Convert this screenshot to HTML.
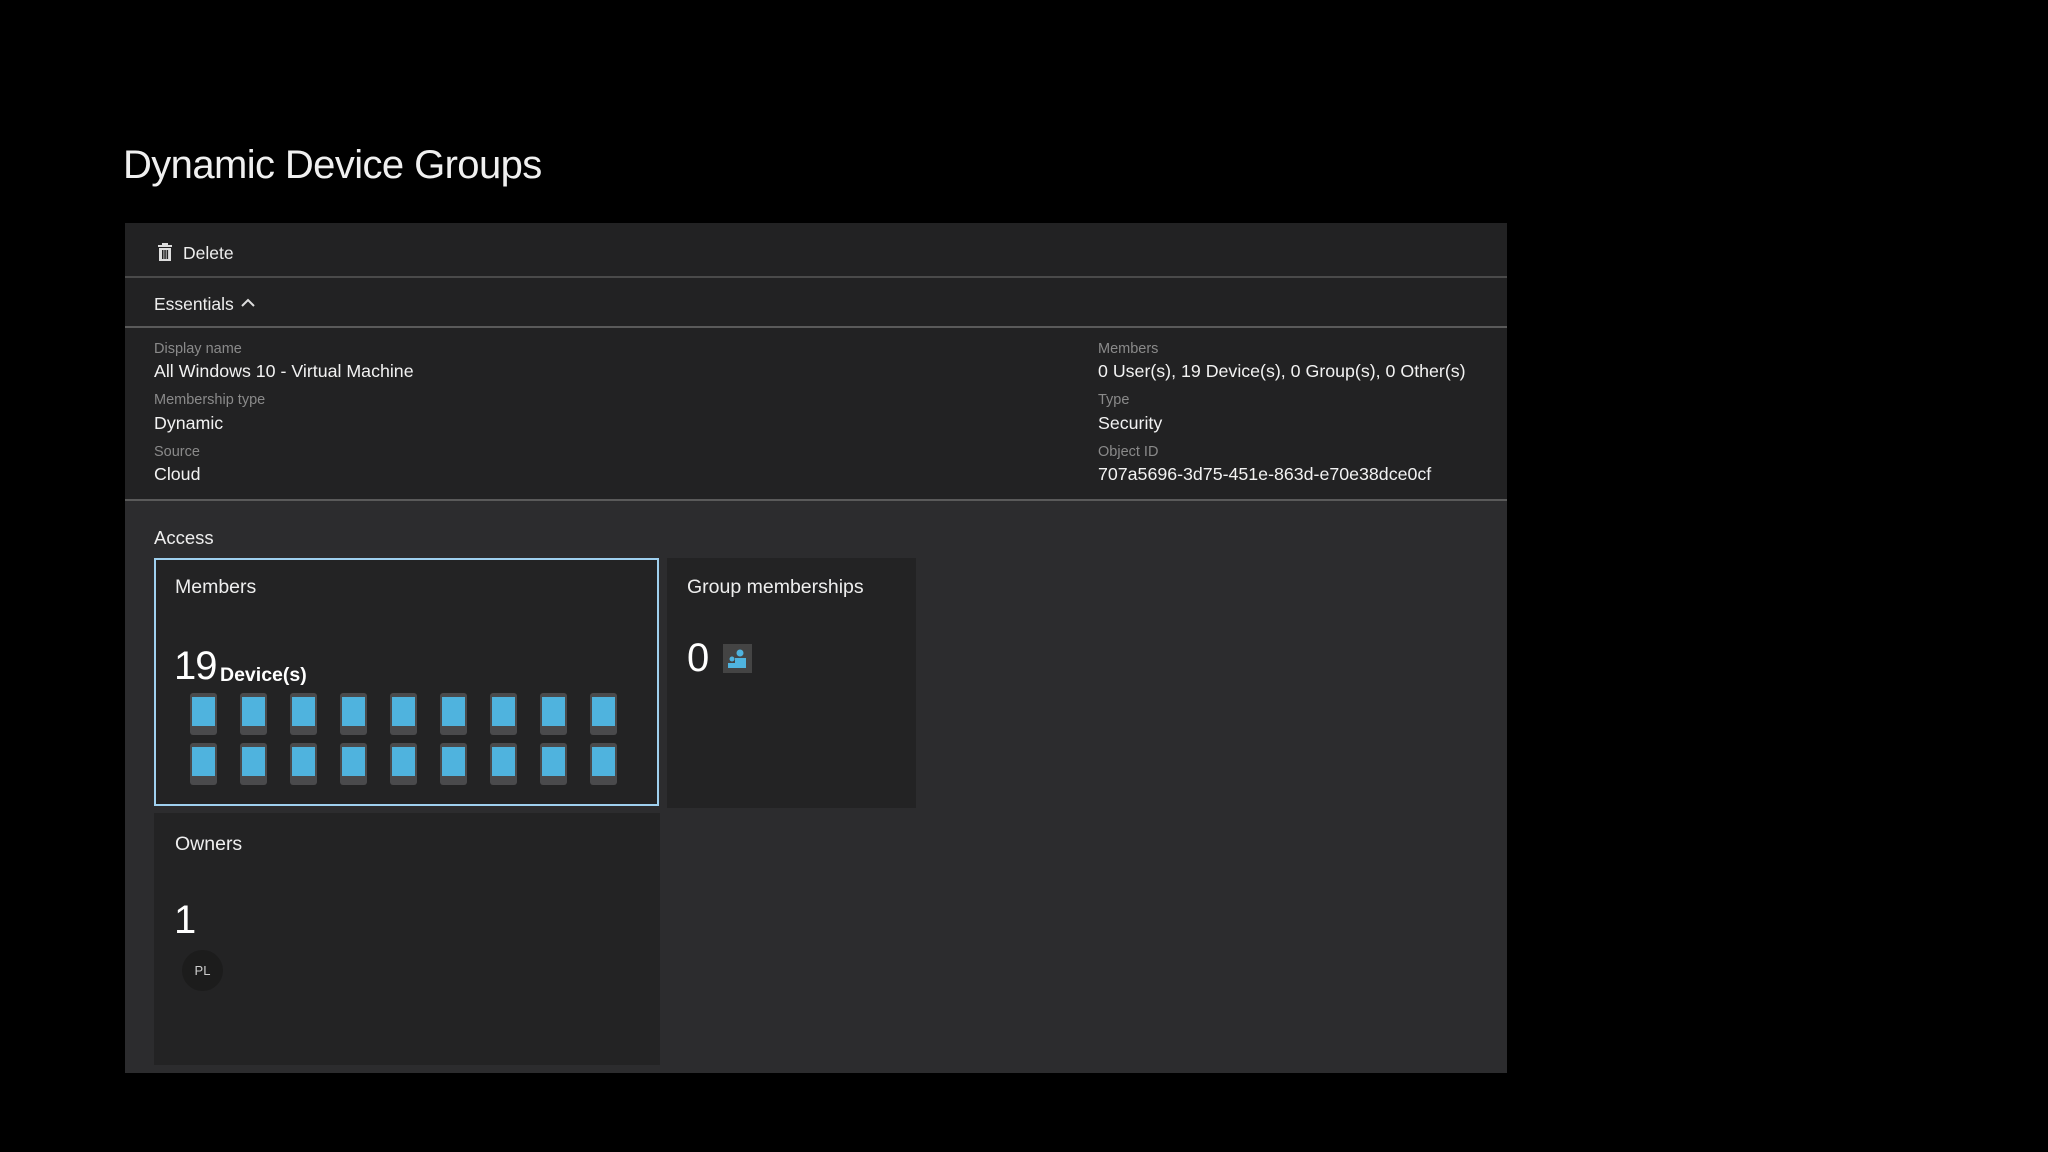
<!DOCTYPE html>
<html><head><meta charset="utf-8"><style>
*{margin:0;padding:0;box-sizing:border-box}
body{width:2048px;height:1152px;background:#000;font-family:"Liberation Sans",sans-serif;color:#fff;position:relative;overflow:hidden}
.a{position:absolute}
.lbl{font-size:14.5px;color:#8a8a8a}
.val{font-size:17.8px;color:#f2f2f2}
.dev{position:absolute;width:27px;height:42px;background:#4a4a4c;border-radius:3px}
.dev i{position:absolute;left:2px;top:4px;width:23px;height:29px;background:#4fb3de}
</style></head><body>
<div class="a" style="left:123px;top:143px;font-size:40px;font-weight:300;color:#f0f0f0;letter-spacing:-0.6px">Dynamic Device Groups</div>
<div class="a" style="left:125px;top:223px;width:1382px;height:850px;background:#2c2c2e"></div>
<div class="a" style="left:125px;top:223px;width:1382px;height:277px;background:#222223"></div>
<div class="a" style="left:125px;top:276px;width:1382px;height:2px;background:#4a4a4a"></div>
<div class="a" style="left:125px;top:326px;width:1382px;height:2px;background:#5a5a5a"></div>
<div class="a" style="left:125px;top:499px;width:1382px;height:2px;background:#5a5a5a"></div>
<svg class="a" style="left:157px;top:243px" width="16" height="18" viewBox="0 0 16 18"><rect x="1" y="2" width="14" height="2" fill="#ddd"/><rect x="5" y="0" width="6" height="2" fill="#ddd"/><rect x="2" y="5" width="12" height="13" fill="#ddd"/><rect x="5" y="7" width="1.5" height="9" fill="#222"/><rect x="7.3" y="7" width="1.5" height="9" fill="#222"/><rect x="9.6" y="7" width="1.5" height="9" fill="#222"/></svg>
<div class="a" style="left:183px;top:243px;font-size:17.5px;color:#eee">Delete</div>
<div class="a" style="left:154px;top:294px;font-size:17.5px;color:#eee">Essentials</div>
<svg class="a" style="left:240px;top:296px" width="16" height="12"><path d="M2 10 L8 4 L14 10" stroke="#ddd" stroke-width="2" fill="none"/></svg>
<div class="a lbl" style="left:154px;top:341px">Display name</div>
<div class="a val" style="left:154px;top:361px">All Windows 10 - Virtual Machine</div>
<div class="a lbl" style="left:154px;top:392px">Membership type</div>
<div class="a val" style="left:154px;top:413px">Dynamic</div>
<div class="a lbl" style="left:154px;top:444px">Source</div>
<div class="a val" style="left:154px;top:464px">Cloud</div>
<div class="a lbl" style="left:1098px;top:341px">Members</div>
<div class="a val" style="left:1098px;top:361px">0 User(s), 19 Device(s), 0 Group(s), 0 Other(s)</div>
<div class="a lbl" style="left:1098px;top:392px">Type</div>
<div class="a val" style="left:1098px;top:413px">Security</div>
<div class="a lbl" style="left:1098px;top:444px">Object ID</div>
<div class="a val" style="left:1098px;top:464px">707a5696-3d75-451e-863d-e70e38dce0cf</div>
<div class="a" style="left:154px;top:527px;font-size:18.5px;color:#eee">Access</div>
<div class="a" style="left:154px;top:558px;width:505px;height:248px;background:#232324;border:2px solid #9fd0ef"></div>
<div class="a" style="left:175px;top:576px;font-size:19.5px;color:#eee">Members</div>
<div class="a" style="left:174px;top:644px;font-size:40px;letter-spacing:-1px">19</div>
<div class="a" style="left:220px;top:664px;font-size:19.5px;font-weight:bold">Device(s)</div>
<div id="devs"></div>
<div class="a" style="left:667px;top:558px;width:249px;height:250px;background:#232324"></div>
<div class="a" style="left:687px;top:576px;font-size:19.5px;color:#eee">Group memberships</div>
<div class="a" style="left:687px;top:636px;font-size:40px">0</div>
<svg class="a" style="left:723px;top:644px" width="29" height="29" viewBox="0 0 29 29"><rect width="29" height="29" fill="#444"/><circle cx="17" cy="9" r="3.5" fill="#4fb3de"/><rect x="12" y="14" width="11" height="10" fill="#4fb3de"/><circle cx="9" cy="15" r="2.5" fill="#4fb3de"/><rect x="5" y="19" width="8" height="5" fill="#4fb3de"/></svg>
<div class="a" style="left:154px;top:813px;width:506px;height:252px;background:#232324"></div>
<div class="a" style="left:175px;top:833px;font-size:19.5px;color:#eee">Owners</div>
<div class="a" style="left:174px;top:898px;font-size:40px">1</div>
<div class="a" style="left:182px;top:950px;width:41px;height:41px;border-radius:50%;background:#1c1c1c;font-size:13px;color:#ccc;text-align:center;line-height:41px">PL</div>
<script>
var h='';for(var r=0;r<2;r++)for(var c=0;c<9;c++){h+='<div class="dev" style="left:'+(190+c*50)+'px;top:'+(693+r*50)+'px"><i></i></div>';}
document.getElementById('devs').innerHTML=h;
</script>
</body></html>
